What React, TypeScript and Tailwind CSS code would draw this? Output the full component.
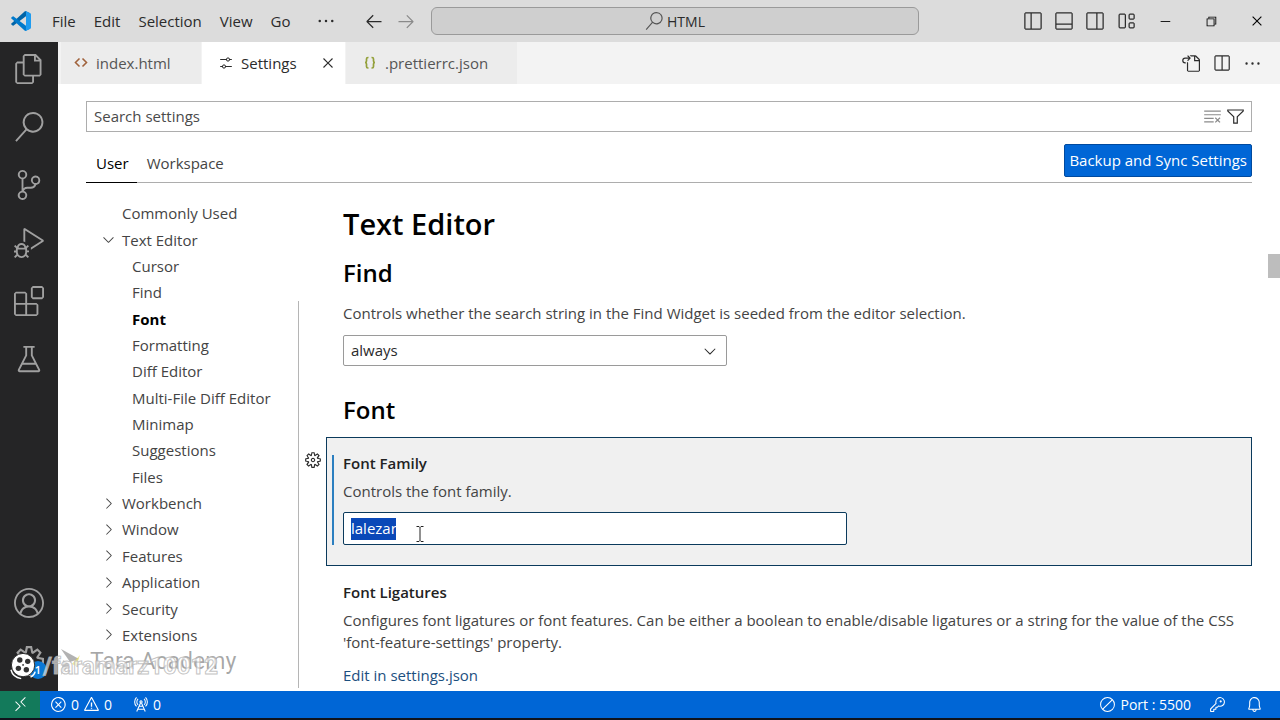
import React from 'react';
import type { IconType } from 'react-icons';
import {
  VscAccount,
  VscArrowLeft,
  VscArrowRight,
  VscBeaker,
  VscBell,
  VscChevronDown,
  VscChevronRight,
  VscChromeClose,
  VscChromeMinimize,
  VscChromeRestore,
  VscCircleSlash,
  VscClearAll,
  VscClose,
  VscDebugAlt,
  VscEllipsis,
  VscError,
  VscExtensions,
  VscFiles,
  VscFilter,
  VscGear,
  VscGoToFile,
  VscKey,
  VscLayout,
  VscLayoutPanelOff,
  VscLayoutSidebarLeftOff,
  VscLayoutSidebarRightOff,
  VscRadioTower,
  VscRemote,
  VscSearch,
  VscSettings,
  VscSettingsGear,
  VscSourceControl,
  VscSplitHorizontal,
  VscWarning,
} from 'react-icons/vsc';

type IconButton = { label: string; icon: IconType };

const MENUS = ['File', 'Edit', 'Selection', 'View', 'Go'];

const LAYOUT_BUTTONS: IconButton[] = [
  { label: 'Toggle Primary Side Bar', icon: VscLayoutSidebarLeftOff },
  { label: 'Toggle Panel', icon: VscLayoutPanelOff },
  { label: 'Toggle Secondary Side Bar', icon: VscLayoutSidebarRightOff },
  { label: 'Customize Layout', icon: VscLayout },
];

const ACTIVITIES: IconButton[] = [
  { label: 'Explorer', icon: VscFiles },
  { label: 'Search', icon: VscSearch },
  { label: 'Source Control', icon: VscSourceControl },
  { label: 'Run and Debug', icon: VscDebugAlt },
  { label: 'Extensions', icon: VscExtensions },
  { label: 'Testing', icon: VscBeaker },
];

type TocItem = { label: string; level: 0 | 1; open?: boolean; leaf?: boolean; active?: boolean };

const TOC: TocItem[] = [
  { label: 'Commonly Used', level: 0, leaf: true },
  { label: 'Text Editor', level: 0, open: true },
  { label: 'Cursor', level: 1 },
  { label: 'Find', level: 1 },
  { label: 'Font', level: 1, active: true },
  { label: 'Formatting', level: 1 },
  { label: 'Diff Editor', level: 1 },
  { label: 'Multi-File Diff Editor', level: 1 },
  { label: 'Minimap', level: 1 },
  { label: 'Suggestions', level: 1 },
  { label: 'Files', level: 1 },
  { label: 'Workbench', level: 0 },
  { label: 'Window', level: 0 },
  { label: 'Features', level: 0 },
  { label: 'Application', level: 0 },
  { label: 'Security', level: 0 },
  { label: 'Extensions', level: 0 },
];

function Logo() {
  return (
    <svg viewBox="0 0 100 100" className="size-5" aria-hidden="true">
      <path d="M96 11 75 1a6 6 0 0 0-7 1L2 62a4 4 0 0 0 0 6l6 5a4 4 0 0 0 5 0L93 13c3-2 7 0 7 3 0-2-2-4-4-5Z" fill="#0065A9" />
      <path d="m96 89-21 10a6 6 0 0 1-7-1L2 38a4 4 0 0 1 0-6l6-5a4 4 0 0 1 5 0l80 60c3 2 7 0 7-3 0 2-2 4-4 5Z" fill="#007ACC" />
      <path d="M75 99a6 6 0 0 1-7-1c2 2 7 1 7-3V5c0-4-5-5-7-3a6 6 0 0 1 7-1l21 10c2 1 4 3 4 5v68c0 2-2 4-4 5L75 99Z" fill="#1F9CF0" />
    </svg>
  );
}

function HtmlFileIcon() {
  return (
    <svg viewBox="0 0 16 16" className="size-4" fill="none" stroke="#a0623c" strokeWidth="1.6" aria-hidden="true">
      <path d="M6.500 3.500 2.500 7.500l4 4M9.500 3.500l4 4-4 4" />
    </svg>
  );
}

function JsonFileIcon() {
  return (
    <svg viewBox="0 0 16 16" className="size-4" fill="none" stroke="#93a03a" strokeWidth="1.7" aria-hidden="true">
      <path d="M6.500 2.500H6Q4.500 2.500 4.500 4V6Q4.500 7.500 3 7.500 4.500 7.500 4.500 9V11.500Q4.500 13 6 13H6.500M9.500 2.500H10Q11.500 2.500 11.500 4V6Q11.500 7.500 13 7.500 11.500 7.500 11.500 9V11.500Q11.500 13 10 13H9.500" />
    </svg>
  );
}

function TitleBar() {
  return (
    <header className="flex h-[42px] shrink-0 items-center bg-[#dcdcdc] text-[#2b2b2b]">
      <div className="flex flex-1 items-center pl-[11px]">
        <Logo />
        <nav className="ml-3 flex items-center">
          {MENUS.map((menu) => (
            <button key={menu} className="px-[9px] py-1">
              {menu}
            </button>
          ))}
          <button aria-label="More" className="ml-3 p-1">
            <VscEllipsis size={20} />
          </button>
        </nav>
        <button aria-label="Go Back" className="ml-5 p-1">
          <VscArrowLeft size={20} />
        </button>
        <button aria-label="Go Forward" className="ml-1 p-1 text-[#8a8a8a]">
          <VscArrowRight size={20} />
        </button>
      </div>
      <button className="flex h-7 w-[488px] items-center justify-center gap-1 rounded-md border border-[#9a9a9a] bg-[#cfcfcf]">
        <VscSearch size={18} className="text-[#555555]" />
        <span className="text-[14px]">HTML</span>
      </button>
      <div className="flex items-center pl-[104px]">
        <div className="flex gap-[11px]">
          {LAYOUT_BUTTONS.map(({ label, icon: Icon }) => (
            <button key={label} aria-label={label}>
              <Icon size={20} />
            </button>
          ))}
        </div>
        <div className="flex pl-1.5 text-black">
          <button aria-label="Minimize" className="w-[46px] pl-4">
            <VscChromeMinimize size={14} />
          </button>
          <button aria-label="Restore" className="w-[46px] pl-4">
            <VscChromeRestore size={14} />
          </button>
          <button aria-label="Close" className="w-[46px] pl-4">
            <VscChromeClose size={14} />
          </button>
        </div>
      </div>
    </header>
  );
}

function ActivityBar() {
  return (
    <aside className="flex w-[58px] shrink-0 flex-col items-center justify-between bg-[#252526] pt-[11px] pb-[14px] text-[#a0a0a0]">
      <div className="flex flex-col gap-[26px]">
        {ACTIVITIES.map(({ label, icon: Icon }) => (
          <button key={label} aria-label={label}>
            <Icon size={30} className="m-px" />
          </button>
        ))}
      </div>
      <div className="flex flex-col gap-[26px]">
        <button aria-label="Accounts">
          <VscAccount size={30} className="m-px" />
        </button>
        <button aria-label="Manage" className="relative">
          <VscSettingsGear size={30} className="m-px" />
          <span className="absolute top-4 left-4 flex size-[18px] items-center justify-center rounded-full bg-[#0a78d6] text-[11px] font-semibold text-white">
            1
          </span>
        </button>
      </div>
    </aside>
  );
}

function EditorTabs() {
  return (
    <div className="flex h-[42px] shrink-0 items-stretch justify-between bg-[#f3f3f3] pl-[3px]">
      <div role="tablist" className="flex gap-px text-[#555555]">
        <button role="tab" aria-selected="false" className="flex w-[140px] items-center gap-[7px] bg-[#ececec] pl-3">
          <HtmlFileIcon />
          index.html
        </button>
        <div role="tab" aria-selected="true" className="flex w-[143px] items-center gap-[7px] bg-white pl-4 text-[#2b2b2b]">
          <VscSettings size={16} />
          Settings
          <button aria-label="Close Settings" className="ml-auto pr-2">
            <VscClose size={18} />
          </button>
        </div>
        <button role="tab" aria-selected="false" className="flex w-[171px] items-center gap-[7px] bg-[#ececec] pl-4">
          <JsonFileIcon />
          .prettierrc.json
        </button>
      </div>
      <div className="flex items-center gap-3 pr-[18px] text-[#2b2b2b]">
        <button aria-label="Open Settings (JSON)">
          <VscGoToFile size={19} />
        </button>
        <button aria-label="Split Editor Right">
          <VscSplitHorizontal size={19} />
        </button>
        <button aria-label="More Actions">
          <VscEllipsis size={19} />
        </button>
      </div>
    </div>
  );
}

function SettingsHeader() {
  return (
    <div className="shrink-0 px-7 pt-[17px]">
      <div className="flex h-[31px] items-center gap-1 border border-[#adadad] pr-1.5 pl-[7px]">
        <input
          aria-label="Search settings"
          placeholder="Search settings"
          className="min-w-0 flex-1 bg-transparent outline-none placeholder:text-[#4a4a4a]"
        />
        <button aria-label="Clear Settings Search Input" className="text-[#8a8a8a]">
          <VscClearAll size={19} />
        </button>
        <button aria-label="Filter Settings" className="text-[#2b2b2b]">
          <VscFilter size={19} />
        </button>
      </div>
      <div className="mt-3 flex items-start justify-between border-b border-[#adadad]">
        <div role="tablist" className="-mb-px flex h-[39px]">
          <button role="tab" aria-selected="true" className="border-b border-black pr-2 pl-2.5 text-black">
            User
          </button>
          <button role="tab" aria-selected="false" className="border-b border-transparent pr-2 pl-2.5 text-[#444444]">
            Workspace
          </button>
        </div>
        <button className="h-[33px] rounded-xs border border-[#004a9f] bg-[#0066d6] px-1 text-white">
          Backup and Sync Settings
        </button>
      </div>
    </div>
  );
}

function Toc() {
  return (
    <ul className="flex w-[212px] shrink-0 flex-col pt-[17px] pb-[43px] pl-3.5 text-[#444444]">
      {TOC.map((item) => (
        <li key={item.label} className="flex flex-1 items-center">
          <span className="flex w-[22px] shrink-0">
            {item.level === 0 && !item.leaf && (item.open ? <VscChevronDown size={17} /> : <VscChevronRight size={17} />)}
          </span>
          <a
            href="#"
            className={`leading-5 whitespace-nowrap ${item.level === 1 ? 'pl-2.5' : ''} ${item.active ? 'font-bold text-black' : ''}`}
          >
            {item.label}
          </a>
        </li>
      ))}
    </ul>
  );
}

function SettingsBody() {
  return (
    <div className="min-w-0 flex-1 overflow-hidden text-[#444444]">
      <div className="pl-11">
        <h1 className="mt-[21px] text-[29px] leading-10 font-semibold text-black">Text Editor</h1>
        <h2 className="mt-[13px] text-[24px] leading-8 font-semibold text-black">Find</h2>
        <label htmlFor="seed" className="mt-[13px] block leading-[22px]">
          Controls whether the search string in the Find Widget is seeded from the editor selection.
        </label>
        <div className="relative mt-[11px] w-[384px]">
          <select
            id="seed"
            defaultValue="always"
            className="h-[31px] w-full appearance-none rounded-xs border border-[#9a9a9a] bg-white pl-[7px] text-[#2b2b2b] outline-none"
          >
            <option value="always">always</option>
            <option value="never">never</option>
            <option value="selection">selection</option>
          </select>
          <VscChevronDown size={18} className="pointer-events-none absolute top-[7px] right-2 text-[#2b2b2b]" />
        </div>
        <h2 className="mt-7 text-[24px] leading-8 font-semibold text-black">Font</h2>
      </div>

      <div className="mt-[11px] flex">
        <button aria-label="More Actions for Font Family" className="w-[27px] shrink-0 self-start pt-3.5 pl-[5px] text-[#2b2b2b]">
          <VscGear size={18} />
        </button>
        <div className="flex-1 border border-[#0b3a5c] bg-[#f0f0f0] pt-[17px] pb-5 pl-[5px]">
          <div className="border-l-2 border-[#2b7fc0] pl-[9px]">
            <label htmlFor="family" className="block leading-4 font-semibold text-[#222222]">
              Font Family
            </label>
            <p className="mt-[9px] leading-[22px]">Controls the font family.</p>
            <div className="relative mt-2.5 flex h-[33px] w-[504px] items-center rounded-xs border border-[#0b3a5c] bg-white pl-[7px]">
              <input
                id="family"
                defaultValue="lalezar"
                className="h-[22px] w-[45px] bg-[#0a48b8] text-white outline-none"
              />
              {/* text pointer */}
              <svg viewBox="0 0 10 18" className="absolute top-3 left-[71px] h-[18px] w-2.5" fill="none" stroke="#222222">
                <path d="M1.500 1.500H4L5 2.500 6 1.500H8.500M5 2.500V15.500M1.500 16.500H4L5 15.500 6 16.500H8.500" />
              </svg>
            </div>
          </div>
        </div>
      </div>

      <section className="pt-4 pl-11">
        <h3 className="leading-5 font-semibold text-[#222222]">Font Ligatures</h3>
        <p className="mt-[7px] leading-[22px]">
          Configures font ligatures or font features. Can be either a boolean to enable/disable ligatures or a string for the
          value of the CSS 'font-feature-settings' property.
        </p>
        <a href="#" className="mt-[11px] block leading-[22px] text-[#1c4f80]">
          Edit in settings.json
        </a>
      </section>
    </div>
  );
}

function StatusBar() {
  return (
    <footer className="flex h-[29px] shrink-0 items-stretch border-b-2 border-[#10131c] bg-[#0066d6] text-[14px] text-white">
      <button aria-label="Open a Remote Window" className="flex w-10 items-center justify-center bg-[#137a5b]">
        <VscRemote size={17} />
      </button>
      <button className="ml-2.5 flex items-center gap-1">
        <VscError size={17} />0<VscWarning size={17} />0
      </button>
      <button className="ml-5 flex items-center gap-1">
        <VscRadioTower size={17} />0
      </button>
      <button className="ml-auto flex items-center gap-1">
        <VscCircleSlash size={17} />
        Port : 5500
      </button>
      <button aria-label="Key" className="ml-[18px]">
        <VscKey size={17} />
      </button>
      <button aria-label="Notifications" className="mr-[17px] ml-5">
        <VscBell size={17} />
      </button>
    </footer>
  );
}

function Watermark() {
  return (
    <div className="pointer-events-none absolute bottom-[38px] left-2.5 font-[Roboto,sans-serif]">
      <div className="absolute bottom-1.5 left-[50px] flex items-center gap-2">
        <svg viewBox="0 0 22 28" className="h-7 w-[22px]" aria-hidden="true">
          <path d="M1 1 19 11 10 14Z" fill="#000000" fillOpacity="0.3" />
          <path d="M1 27 3 12 10 16Z" fill="#000000" fillOpacity="0.22" />
          <path d="M12 16 20 7 16 18Z" fill="#e8dc4a" fillOpacity="0.6" />
        </svg>
        <p className="text-[23px] leading-7 whitespace-nowrap text-black/35">Tara Academy</p>
      </div>
      <div className="relative flex items-center">
        <svg viewBox="0 0 30 30" className="size-7 shrink-0" aria-hidden="true">
          <circle cx="14" cy="14" r="12.500" fill="#ffffff" stroke="#222222" />
          <g fill="#333333">
            <circle cx="10.500" cy="8.500" r="2.900" />
            <circle cx="19" cy="10" r="2.900" />
            <circle cx="9" cy="17.500" r="2.900" />
            <circle cx="17.500" cy="19" r="2.900" />
            <circle cx="14" cy="13.800" r="1" />
          </g>
          <path d="M1 19Q3 27 12 28.500M22 27Q26 25 27 21" fill="none" stroke="#ffffff" strokeWidth="1.500" />
        </svg>
        <p className="ml-[5px] text-[24px] leading-8 font-bold whitespace-nowrap text-white/60 [-webkit-text-stroke:1px_#b4b4b4cc]">
          /faramarz10012
        </p>
      </div>
    </div>
  );
}

export default function App() {
  return (
    <div className="relative flex h-screen flex-col overflow-hidden bg-white font-['Open_Sans','Noto_Sans',sans-serif] text-[15px]">
      <TitleBar />
      <div className="flex min-h-0 flex-1">
        <ActivityBar />
        <main className="flex min-w-0 flex-1 flex-col">
          <EditorTabs />
          <SettingsHeader />
          <div className="relative flex min-h-0 flex-1 px-7">
            <Toc />
            <div className="mt-[118px] mb-[3px] w-px bg-[#b5b5b5]" />
            <SettingsBody />
            <div className="absolute top-[71px] right-0 h-6 w-3 bg-[#bdbdbd]" />
          </div>
        </main>
      </div>
      <StatusBar />
      <Watermark />
    </div>
  );
}
